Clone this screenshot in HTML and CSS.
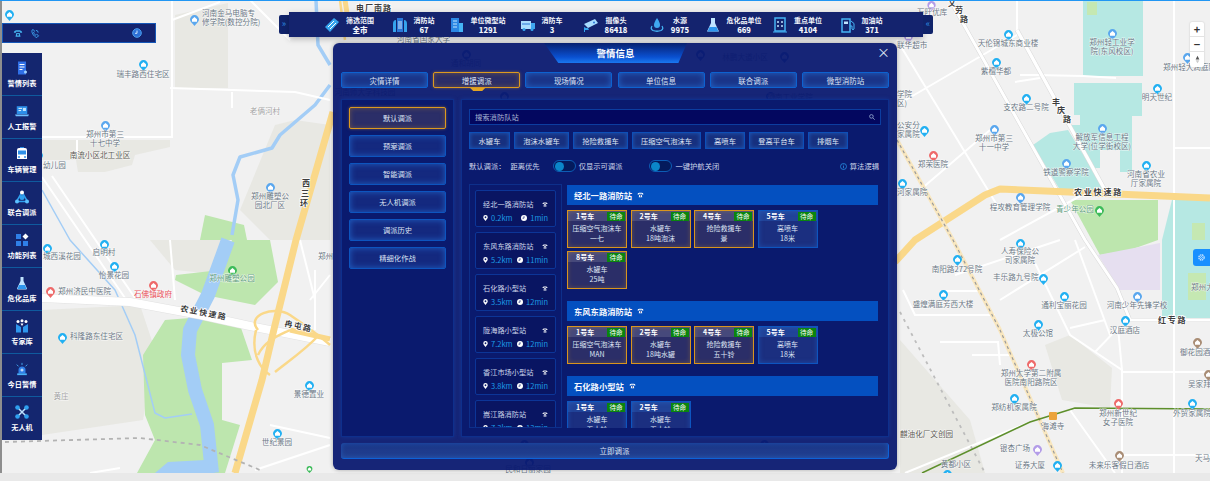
FILE: index.html
```html
<!DOCTYPE html>
<html lang="zh-CN">
<head>
  <meta charset="UTF-8" />
  <meta name="viewport" content="width=device-width, initial-scale=1.0" />
  <title>警情信息</title>
  <link rel="stylesheet" href="styles.css">
</head>
<body>
<svg class="defs" width="0" height="0">
  <symbol id="pin" viewBox="0 0 10 12"><path d="M5 0a5 5 0 0 1 5 5c0 2.500-2.500 4-5 7C2.500 9 0 7.500 0 5a5 5 0 0 1 5-5z"/><path d="M5 2 7.800 4.700V7.500H2.200V4.700z" fill="#fff"/></symbol>
  <symbol id="phone" viewBox="0 0 12 10"><path d="M1 4C1 1.500 3 1 6 1s5 .5 5 3H8.500V3h-5v1z" fill="#fff"/><path d="M3 9 4 4.500h4L9 9z" fill="#fff"/><circle cx="6" cy="6.500" r="1.100" fill="#0a1a6c"/></symbol>
  <symbol id="loc" viewBox="0 0 10 12"><path d="M5 0a4.500 4.500 0 0 1 4.500 4.500C9.500 7 7 9 5 12 3 9 .5 7 .5 4.500A4.500 4.500 0 0 1 5 0z" fill="#fff"/><circle cx="5" cy="4.500" r="1.800" fill="#0a1a6c"/></symbol>
  <symbol id="clock" viewBox="0 0 10 10"><circle cx="5" cy="5" r="5" fill="#fff"/><path d="M5 2v3.300H2.500" fill="none" stroke="#0a1a6c" stroke-width="1.200"/></symbol>
</svg>

<div class="page">
  <!-- map -->
  <svg class="map" viewBox="0 0 1210 473" width="1210" height="473">
    <rect width="1210" height="473" fill="#f1f1f1"/>
    <g fill="#e8e8e3">
      <path d="M175 15 228 3V88H175z"/>
      <path d="M42 140H170V147L135 155 132 165 105 172 78 172 76 160H42z"/>
      <path d="M240 210 275 125 295 120 330 125 330 240 295 240 270 240z"/>
      <path d="M42 310 140 305 155 350 143 420 42 435z"/>
      <path d="M150 240H230L225 275 175 270z"/>
      <path d="M900 340 970 420 985 473H900z"/>
      <path d="M1045 345 1070 335 1112 368 1110 408 1062 400z"/>
    </g>
    <g fill="#bde6ae">
      <path d="M232 240H270L278 282 255 305 205 295 175 280 176 275 220 270z"/>
      <path d="M165 320 190 318 240 325 252 360 222 363 222 420 240 425 225 473H137L155 440 145 415 143 355z"/>
      <path d="M205 215 244 225 247 240H200z"/>
      <path d="M1070 200H1158V240L1130 250 1100 255z"/>
    </g>
    <path d="M1098 255 1160 243V290H1120z" fill="#e6dff0"/>
    <g fill="#b6e8e3">
      <path d="M1083 0H1143V76H1083z"/>
      <path d="M1074 83H1142V116H1132V172H1120V150H1100V168H1090L1068 125H1080V115H1074z"/>
      <path d="M1033 145 1050 133 1068 130 1105 190H1060z"/>
      <path d="M1172 200H1210V320H1162V240z"/>
    </g>
    <path d="M1192 223H1205V240H1192zM1188 273H1206V300H1188z" fill="#c5e8b2"/>
    <path d="M1087 2H1097V15H1087z" fill="#c5e8b2"/>
    <!-- rivers -->
    <g fill="none" stroke="#a3cdf6" stroke-linejoin="round">
      <path d="M316 0 318 45 330 65M330 85 315 105 280 135 272 148 240 157 233 175 238 200 232 235" stroke-width="3.500"/>
      <path d="M42 190 70 240 115 290 135 335 155 413 165 418 192 414" stroke-width="1.500"/>
      <path d="M228 240 220 262 208 295 190 330 188 355 195 390 207 425 212 473" stroke-width="14"/>
    </g>
    <path d="M155 473 168 462 205 460 215 473z" fill="#a3cdf6"/>
    <!-- minor roads -->
    <g fill="none" stroke="#fff" stroke-width="2">
      <path d="M172 0V137H42M170 88 295 92 330 100M172 20 220 2M232 92V108M77 140V155M250 0 290 40"/>
      <path d="M170 240 175 300M270 425 330 438M255 470 330 445M90 473 120 468"/>
      <path d="M42 177 125 298M52 176 135 298M315 270V330M300 240 315 300M330 275 310 300"/>
      <path d="M1017 0V35M1020 75 1035 75 1083 76M1015 82 1040 78M1116 78 1083 76M1174 0V473M1174 148H1210"/>
      <path d="M897 40 1000 210M897 105 1017 35M920 190 990 130M1000 240 1082 195M955 275 1060 240M1000 300 1085 247"/>
      <path d="M1035 263 1070 335 1122 370V473M1070 328 1105 320M1095 352 1118 328 1122 370M1075 240 1110 335M1122 372H1210M1122 455H1210"/>
      <path d="M903 290 915 315H995M940 342H998L1000 365M972 355H1010M942 291H980M1070 410 1115 473M1123 321H1210M905 473 1030 422"/>
    </g>
    <!-- thick streets -->
    <g fill="none" stroke-linejoin="round">
      <path d="M950 0 1085 240 1117 288 1130 320H1210" stroke="#d9d9d9" stroke-width="4"/>
      <path d="M950 0 1085 240 1117 288 1130 320H1210" stroke="#fff" stroke-width="3"/>
      <path d="M1017 30 1105 190" stroke="#d9d9d9" stroke-width="4.500"/>
      <path d="M1017 30 1105 190" stroke="#fff" stroke-width="3.500"/>
      <path d="M42 298 130 302 200 315 250 326 330 342" stroke="#e2e2e2" stroke-width="9"/>
      <path d="M42 298 130 302 200 315 250 326 330 342" stroke="#fff" stroke-width="8"/>
    </g>
    <!-- highways -->
    <g fill="none" stroke-linejoin="round">
      <path d="M340 0 345 40M333 112 296 240 275 325 262 380 235 473M258 330C245 315 275 305 290 315S325 340 330 345M256 330C250 355 262 370 270 375M318 336C305 350 290 360 275 372M290 330C280 335 265 340 258 355" stroke="#fad889" stroke-width="2.500"/>
      <path d="M333 112 296 240 275 325 262 380 235 473" stroke="#fad889" stroke-width="7"/>
      <path d="M345 0 348 20" stroke="#fad889" stroke-width="5"/>
      <path d="M895 262 915 240 985 195 1000 189 1210 198" stroke="#fad889" stroke-width="7"/>
      <path d="M290 330 330 339" stroke="#fad889" stroke-width="5"/>
      <path d="M897 140 953 240 1000 330 1063 473" stroke="#f9e7bf" stroke-width="4"/>
      <path d="M897 140 953 240 1000 330 1063 473" stroke="#9a9a9a" stroke-width="1.200" stroke-dasharray="3 3"/>
      <path d="M900 312 985 473" stroke="#bdbdbd" stroke-width="1.800" stroke-dasharray="3 5"/>
      <path d="M5 442 140 438 200 445 260 470" stroke="#b3b3b3" stroke-width="1.800" stroke-dasharray="4 4"/>
      <path d="M922 473 1030 422 1075 408 1210 409" stroke="#5d8f2b" stroke-width="1.500"/>
    </g>
    <rect x="1049" y="412" width="8" height="8" rx="1" fill="#eba33c"/>

    <!-- markers -->
    <g fill="#22b0f2">
      <use href="#pin" x="5" y="10" width="9" height="11"/>
      <use href="#pin" x="139" y="60" width="9" height="11"/>
      <use href="#pin" x="34" y="151" width="9" height="11"/>
      <use href="#pin" x="43" y="244" width="9" height="11"/>
      <use href="#pin" x="100" y="240" width="9" height="11"/>
      <use href="#pin" x="110" y="262" width="9" height="11"/>
      <use href="#pin" x="58" y="333" width="9" height="11"/>
      <use href="#pin" x="305" y="381" width="9" height="11"/>
      <use href="#pin" x="273" y="429" width="9" height="11"/>
      <use href="#pin" x="1004" y="30" width="9" height="11"/>
      <use href="#pin" x="992" y="58" width="9" height="11"/>
      <use href="#pin" x="1022" y="94" width="9" height="11"/>
      <use href="#pin" x="920" y="126" width="9" height="11"/>
      <use href="#pin" x="898" y="179" width="9" height="11"/>
      <use href="#pin" x="1153" y="84" width="9" height="11"/>
      <use href="#pin" x="1142" y="161" width="9" height="11"/>
      <use href="#pin" x="1016" y="239" width="9" height="11"/>
      <use href="#pin" x="953" y="255" width="9" height="11"/>
      <use href="#pin" x="1039" y="274" width="9" height="11"/>
      <use href="#pin" x="1060" y="292" width="9" height="11"/>
      <use href="#pin" x="939" y="290" width="9" height="11"/>
      <use href="#pin" x="1121" y="316" width="9" height="11"/>
      <use href="#pin" x="1034" y="320" width="9" height="11"/>
      <use href="#pin" x="1010" y="394" width="9" height="11"/>
      <use href="#pin" x="1188" y="399" width="9" height="11"/>
      <use href="#pin" x="1053" y="461" width="9" height="11"/>
      <use href="#pin" x="943" y="470" width="9" height="11"/>
    </g>
    <g fill="#5aa7ee">
      <use href="#pin" x="190" y="15" width="9" height="11"/>
      <use href="#pin" x="101" y="121" width="9" height="11"/>
      <use href="#pin" x="266" y="183" width="9" height="11"/>
      <use href="#pin" x="1108" y="29" width="9" height="11"/>
      <use href="#pin" x="1183" y="53" width="9" height="11"/>
      <use href="#pin" x="990" y="125" width="9" height="11"/>
      <use href="#pin" x="1098" y="124" width="9" height="11"/>
      <use href="#pin" x="1062" y="159" width="9" height="11"/>
      <use href="#pin" x="1016" y="193" width="9" height="11"/>
      <use href="#pin" x="1133" y="292" width="9" height="11"/>
    </g>
    <g fill="#ee6a6a">
      <use href="#pin" x="46" y="287" width="9" height="11"/>
      <use href="#pin" x="149" y="281" width="9" height="11"/>
      <use href="#pin" x="929" y="151" width="9" height="11"/>
      <use href="#pin" x="1027" y="360" width="9" height="11"/>
      <use href="#pin" x="1114" y="399" width="9" height="11"/>
    </g>
    <g fill="#3dbb5a">
      <use href="#pin" x="228" y="266" width="9" height="11"/>
      <use href="#pin" x="305" y="466" width="9" height="7"/>
      <use href="#pin" x="1095" y="206" width="9" height="11"/>
    </g>
    <g fill="#a98d75">
      <use href="#pin" x="1193" y="338" width="9" height="11"/>
      <use href="#pin" x="1204" y="370" width="9" height="11"/>
      <use href="#pin" x="1115" y="451" width="9" height="11"/>
    </g>
    <g fill="#b39ce8">
      <use href="#pin" x="927" y="1" width="9" height="10"/>
      <use href="#pin" x="904" y="32" width="9" height="11"/>
      <use href="#pin" x="1033" y="445" width="9" height="11"/>
    </g>
    <g fill="#2a5fc0">
      <use href="#pin" x="462" y="50" width="9" height="11"/>
      <use href="#pin" x="696" y="50" width="9" height="11"/>
      <use href="#pin" x="780" y="52" width="9" height="11"/>
      <use href="#pin" x="500" y="92" width="9" height="11"/>
      <use href="#pin" x="766" y="92" width="9" height="11"/>
      <use href="#pin" x="520" y="225" width="9" height="11"/>
      <use href="#pin" x="700" y="400" width="9" height="11"/>
      <use href="#pin" x="820" y="400" width="9" height="11"/>
      <use href="#pin" x="520" y="440" width="9" height="11"/>
      <use href="#pin" x="760" y="440" width="9" height="11"/>
      <use href="#pin" x="525" y="458" width="9" height="11"/>
    </g>

    <!-- labels -->
    <g class="lb">
      <text x="202" y="16">河南金马电脑专</text><text x="202" y="25">修学院(数控分院)</text>
      <text class="mid" x="143" y="77">瑞丰路西住宅区</text>
      <text class="mid" x="105" y="137">郑州市第三</text><text class="mid" x="105" y="146">十七中学</text>
      <text class="mid dark" x="100" y="158">南流小区北工业区</text>
      <text x="43" y="168">幼儿园</text>
      <text class="mid" x="270" y="199">郑州雕塑公</text><text class="mid" x="270" y="208">园北厂区</text>
      <text class="mid grey" x="265" y="114">老俩河村</text>
      <text x="43" y="259">城西溪花园</text>
      <text class="mid" x="104" y="255">启明村</text>
      <text class="mid" x="114" y="278">怡景花园</text>
      <text class="mid park" x="232" y="281">郑州雕塑公园</text>
      <text x="58" y="294">郑州济民中医院</text>
      <text class="mid red" x="153" y="297">石佛镇政府</text>
      <text x="70" y="339">科隆路东住宅区</text>
      <text class="mid grey" x="61" y="399">黄庄</text>
      <text class="mid" x="309" y="397">景德置业</text>
      <text class="mid" x="277" y="445">世纪景园</text>
      <text x="318" y="259">郑州</text>
      <text x="917" y="15">万旺优库</text>
      <text x="897" y="48">联华超市</text>
      <text class="mid" x="1008" y="46">天伦锦城东商业楼</text>
      <text class="mid" x="996" y="74">紫檀华都</text>
      <text class="mid" x="1026" y="110">支农路二号院</text>
      <text class="mid" x="994" y="141">郑州市第三</text><text class="mid" x="994" y="150">十一中学</text>
      <text x="897" y="128">公安分</text><text x="897" y="137">家属院</text>
      <text x="897" y="97">学院</text><text x="897" y="106">区)</text>
      <text class="mid" x="933" y="167">郑荣医院</text>
      <text x="897" y="195">河家属院</text>
      <text class="mid" x="1020" y="210">程攻教育管理学院</text>
      <text class="park" x="1056" y="212">青少年公园</text>
      <text class="mid" x="1066" y="175">铁道警察学院</text>
      <text class="mid" x="1102" y="140">解放军信息工程</text><text class="mid" x="1102" y="149">大学(位学街校区)</text>
      <text class="mid" x="1146" y="177">河南省农业</text><text class="mid" x="1146" y="186">厅家属院</text>
      <text class="mid" x="1112" y="45">郑州轻工业学</text><text class="mid" x="1112" y="54">院(东风校区)</text>
      <text x="1163" y="70">郑州轻大润庭院</text>
      <text class="mid" x="1157" y="100">明天世纪</text>
      <text class="mid" x="1020" y="254">人寿保险公</text><text class="mid" x="1020" y="263">司家属院</text>
      <text class="mid" x="957" y="272">南阳路272号院</text>
      <text x="993" y="280">丰乐路九号院</text>
      <text class="mid" x="1064" y="308">通利宝丽花园</text>
      <text class="mid" x="943" y="307">盛煌满庭芳西大楼</text>
      <text class="mid" x="1137" y="308">河南少年先锋学校</text>
      <text class="mid" x="1125" y="333">汉庭酒店</text>
      <text class="mid" x="1038" y="336">太极公馆</text>
      <text x="1180" y="355">御花园酒店</text>
      <text class="mid" x="1031" y="376">郑州大学第二附属</text><text class="mid" x="1031" y="385">医院南阳路院区</text>
      <text x="1188" y="387">吴家拜</text>
      <text class="mid" x="1014" y="410">郑纺机家属院</text>
      <text class="mid" x="1118" y="416">郑州新世纪</text><text class="mid" x="1118" y="425">女子医院</text>
      <text class="mid" x="1192" y="416">外贸家属院</text>
      <text class="mid" x="1053" y="429">海滩寺</text>
      <text class="dark" x="900" y="437">麒油化厂文创园</text>
      <text class="mid" x="1015" y="451">银杏广场</text>
      <text class="mid" x="1030" y="468">证券大厦</text>
      <text class="mid" x="1119" y="468">未来乐客假日酒店</text>
      <text x="1195" y="461">天马</text>
      <text class="mid" x="956" y="467">黄都小区</text>
      <text x="1191" y="290">郑州大</text>
      <text x="397" y="42">河南省国家大学</text>
      <text class="mid" x="466" y="66">通和胡同</text>
      <text class="mid" x="745" y="60">林鹏大道小区</text>
      <text class="mid" x="365" y="95">河南师大学科技园</text>
      <text class="mid" x="790" y="100">河南工业学院</text>
      <text class="mid" x="780" y="195">自由街社区</text>
      <text class="mid" x="528" y="472">民和日丽家园</text>
    </g>
    <g class="road">
      <text x="356" y="11" letter-spacing="1">电厂南路</text>
      <text x="302 301 300" y="186 196 206">西三环</text>
      <text transform="translate(180 311) rotate(11)" letter-spacing="1.500">农业快速路</text>
      <text transform="translate(284 326) rotate(12)" letter-spacing="1.500">冉屯路</text>
      <text x="1074" y="195" letter-spacing="1.800">农业快速路</text>
      <text x="1158" y="323" letter-spacing="1.800">红专路</text>
      <text x="948 955 960" y="6 13 22">文劳路</text>
      <text x="1052 1057 1063" y="105 113 122">丰庆路</text>
    </g>
  </svg>
  <div class="map-edge"></div>

  <!-- phone strip -->
  <div class="call-bar">
    <svg class="call-ico" viewBox="0 0 12 10"><path d="M1 4C1 1.500 3 1 6 1s5 .5 5 3H8.500V3h-5v1z" fill="#45b4f0"/><path d="M3 9 4 4.500h4L9 9z" fill="#45b4f0"/><circle cx="6" cy="6.500" r="1.100" fill="#14236e"/></svg>
    <svg class="call-ico" viewBox="0 0 10 10"><path d="M2 1C.5 3 3 8 7 9.500L9 7.500 7 6 6 7C5 6.500 3.500 5 3.500 3.500L4.500 2.500 3 .5z" fill="none" stroke="#3fa9f5" stroke-width="1"/><path d="M6 1.500a2.500 2.500 0 0 1 2.500 2.500" fill="none" stroke="#3fa9f5"/></svg>
    <svg class="call-ico clock-ico" viewBox="0 0 10 10"><circle cx="5" cy="5" r="4.300" fill="#2d6fd6" stroke="#4aa0f0"/><path d="M5 2.500v2.800H3" fill="none" stroke="#cfe6ff"/></svg>
  </div>

  <!-- left menu -->
  <nav class="side">
    <a class="side-item"><svg viewBox="0 0 14 14"><path d="M3 .5H11V13.500H3z" fill="#2f6fe6"/><path d="M4.500 3.500H9.500M4.500 6H9.500M4.500 8.500H7.500" stroke="#fff"/><circle cx="10.500" cy="11" r="1.500" fill="#9fd4ff"/></svg><span>警情列表</span></a>
    <a class="side-item"><svg viewBox="0 0 16 14"><path d="M2 1.500H14V10.500H2z" fill="#2c8ee8"/><path d="M4 4H8M4 6.500H7" stroke="#fff"/><path d="M9 3.500H12.500V7H9z" fill="#bfe3ff"/><path d="M0 11H16L15 13H1z" fill="#6fc0ff"/></svg><span>人工报警</span></a>
    <a class="side-item"><svg viewBox="0 0 14 14"><path d="M2 3Q2 1 4 1H10Q12 1 12 3V12H2z" fill="#fff"/><path d="M3 3.500H11V7.500H3z" fill="#2e8fe8"/><path d="M5 1H9V0H5z" fill="#2e8fe8"/><circle cx="4" cy="10" r="1" fill="#2e8fe8"/><circle cx="10" cy="10" r="1" fill="#2e8fe8"/></svg><span>车辆管理</span></a>
    <a class="side-item"><svg viewBox="0 0 14 14"><path d="M7 2 12.500 11.500H1.500z" fill="none" stroke="#2fa0f0" stroke-width="1.500"/><circle cx="7" cy="7.500" r="2.500" fill="#2fa0f0"/><circle cx="7" cy="2.500" r="2" fill="#fff"/><circle cx="2" cy="11.500" r="2" fill="#5cc0ff"/><circle cx="12" cy="11.500" r="2" fill="#5cc0ff"/></svg><span>联合调派</span></a>
    <a class="side-item"><svg viewBox="0 0 14 14"><path d="M1 1H6V6H1zM1 8H6V13H1zM8 8H13V13H8z" fill="#2f7fe8"/><path d="M10.500 .5 13.500 3.500 10.500 6.500 7.500 3.500z" fill="#fff"/></svg><span>功能列表</span></a>
    <a class="side-item"><svg viewBox="0 0 14 14"><path d="M5.500 1H8.500V5L12 12.500Q12 13.500 11 13.500H3Q2 13.500 2 12.500L5.500 5z" fill="#bfe4ff"/><path d="M4 9H10L11.500 13H2.500z" fill="#2d96ee"/></svg><span>危化品库</span></a>
    <a class="side-item"><svg viewBox="0 0 14 14"><circle cx="3" cy="2.500" r="1.500" fill="#fff"/><circle cx="7" cy="1.800" r="1.500" fill="#fff"/><circle cx="11" cy="2.500" r="1.500" fill="#fff"/><path d="M1 5 6 8V13.500H1zM13 5 8 8V13.500H13z" fill="#2f97ee"/><path d="M5.500 4.500H8.500L7 7z" fill="#fff"/></svg><span>专家库</span></a>
    <a class="side-item"><svg viewBox="0 0 16 14"><path d="M4 12V8a4 4 0 0 1 8 0v4z" fill="#2f7fe8"/><path d="M2.500 12H13.500V14H2.500z" fill="#49b2fa"/><path d="M8 6.500V10M6.200 8.200H9.800" stroke="#fff"/><path d="M8 0V2.500M2 2 4 4M14 2 12 4" stroke="#49b2fa"/></svg><span>今日警情</span></a>
    <a class="side-item"><svg viewBox="0 0 14 14"><path d="M3 3 11 11M11 3 3 11" stroke="#bfe4ff" stroke-width="1.500"/><circle cx="2.500" cy="2.500" r="2.300" fill="#2fa0f0"/><circle cx="11.500" cy="2.500" r="2.300" fill="#2fa0f0"/><circle cx="2.500" cy="11.500" r="2.300" fill="#2fa0f0"/><circle cx="11.500" cy="11.500" r="2.300" fill="#2fa0f0"/></svg><span>无人机</span></a>
  </nav>

  <!-- top stats -->
  <div class="stat-handle left">»</div>
  <div class="stat-bar">
    <div class="stat"><svg viewBox="0 0 16 16"><path d="M1 10 10 1 15 5 6 15z" fill="#35a4ee"/><path d="M4 10 10 4M6 12 12 6" stroke="#fff"/></svg><p>筛选范围<b>全市</b></p></div>
    <div class="stat"><svg viewBox="0 0 16 16"><path d="M1 15V7Q1 3 4 3V15zM15 15V7Q15 3 12 3V15z" fill="#35a4ee"/><path d="M5 1H11V15H5z" fill="#2a77d8"/><path d="M7 4V12M9 4V12" stroke="#cfe9ff"/></svg><p>消防站<b>67</b></p></div>
    <div class="stat"><svg viewBox="0 0 16 16"><path d="M2 1H10V15H2z" fill="#2a86e4"/><path d="M10 6H14V15H10z" fill="#45b4f5"/><path d="M4 4H8M4 7H8M4 10H8" stroke="#bfe4ff"/></svg><p>单位微型站<b>1291</b></p></div>
    <div class="stat"><svg viewBox="0 0 16 16"><path d="M1 4H11V12H1z" fill="#a9dcff"/><path d="M11 6H15V12H11z" fill="#3fa7f0"/><path d="M2 7H10" stroke="#2a77d8"/><circle cx="4" cy="12.500" r="1.500" fill="#35a4ee"/><circle cx="12" cy="12.500" r="1.500" fill="#35a4ee"/></svg><p>消防车<b>3</b></p></div>
    <div class="stat"><svg viewBox="0 0 16 16"><path d="M1 7 12 2 15 6 5 11z" fill="#a9dcff"/><path d="M5 11 6 13H2V15H1V10L3 11z" fill="#35a4ee"/><circle cx="11" cy="5.500" r="1" fill="#2a77d8"/></svg><p>摄像头<b>86418</b></p></div>
    <div class="stat"><svg viewBox="0 0 16 16"><path d="M8 1C10 4 11 6 11 8A3 3 0 0 1 5 8C5 6 6 4 8 1z" fill="#3fa7f0"/><path d="M3 9Q1 12 4 13.500 8 15 12 13.500 15 12 13 9" fill="none" stroke="#45b4f5" stroke-width="1.300"/></svg><p>水源<b>9975</b></p></div>
    <div class="stat"><svg viewBox="0 0 16 16"><path d="M6 1H10V6L14 14.500H2L6 6z" fill="#bfe4ff"/><path d="M4.500 10H11.500L13.500 14.500H2.500z" fill="#2d96ee"/></svg><p>危化品单位<b>669</b></p></div>
    <div class="stat"><svg viewBox="0 0 16 16"><path d="M3 1H13V14H3z" fill="none" stroke="#45b4f5" stroke-width="1.500"/><path d="M6 4V6M10 4V6M6 8V10M10 8V10" stroke="#bfe4ff" stroke-width="1.500"/><path d="M1 15H15" stroke="#45b4f5"/></svg><p>重点单位<b>4104</b></p></div>
    <div class="stat"><svg viewBox="0 0 16 16"><path d="M2 2H10V15H2z" fill="none" stroke="#45b4f5" stroke-width="1.500"/><path d="M4 4.500H8V7H4z" fill="#bfe4ff"/><path d="M11 4 14 6.500V12Q13 13.500 12 12V9H10" fill="none" stroke="#45b4f5"/></svg><p>加油站<b>371</b></p></div>
  </div>
  <div class="stat-handle right">«</div>

  <!-- dialog -->
  <section class="dialog">
    <div class="dialog-title">警情信息</div>
    <span class="dialog-close">×</span>

    <div class="tabs">
      <button class="tab">灾情详情</button>
      <button class="tab active">增援调派</button>
      <button class="tab">现场情况</button>
      <button class="tab">单位信息</button>
      <button class="tab">联合调派</button>
      <button class="tab">微型消防站</button>
    </div>

    <div class="panels">
      <div class="panel mode-panel">
        <button class="mode active">默认调派</button>
        <button class="mode">预案调派</button>
        <button class="mode">智能调派</button>
        <button class="mode">无人机调派</button>
        <button class="mode">调派历史</button>
        <button class="mode">精细化作战</button>
      </div>

      <div class="panel main-panel">
        <div class="search">
          <span>搜索消防队站</span>
          <svg viewBox="0 0 10 10"><circle cx="4" cy="4" r="3" fill="none" stroke="#9fb4d8" stroke-width="1.300"/><path d="M6.500 6.500 9.500 9.500" stroke="#9fb4d8" stroke-width="1.300"/></svg>
        </div>

        <div class="filters">
          <button class="filter f3">水罐车</button>
          <button class="filter f5">泡沫水罐车</button>
          <button class="filter f4">抢险救援车</button>
          <button class="filter f6">压缩空气泡沫车</button>
          <button class="filter f2">高喷车</button>
          <button class="filter f4">登高平台车</button>
          <button class="filter f2">排烟车</button>
        </div>

        <div class="options">
          <span>默认调派：</span>
          <span class="opt-sort">距离优先</span>
          <i class="toggle first"></i>
          <span>仅显示可调派</span>
          <i class="toggle second"></i>
          <span>一键护航关闭</span>
          <span class="algo"><svg viewBox="0 0 10 10"><circle cx="5" cy="5" r="4.300" fill="none" stroke="#2a9df0"/><path d="M5 4V7.500M5 2.300V3.300" stroke="#2a9df0"/></svg>算法逻辑</span>
        </div>

        <div class="dispatch">
          <div class="stations">
            <div class="st-card"><div class="st-name">经北一路消防站<svg viewBox="0 0 12 10"><use href="#phone"/></svg></div><div class="st-meta"><svg viewBox="0 0 10 12"><use href="#loc"/></svg><span>0.2km</span><svg class="clk" viewBox="0 0 10 10"><use href="#clock"/></svg><span>1min</span></div></div>
            <div class="st-card"><div class="st-name">东风东路消防站<svg viewBox="0 0 12 10"><use href="#phone"/></svg></div><div class="st-meta"><svg viewBox="0 0 10 12"><use href="#loc"/></svg><span>5.2km</span><svg class="clk" viewBox="0 0 10 10"><use href="#clock"/></svg><span>11min</span></div></div>
            <div class="st-card"><div class="st-name">石化路小型站<svg viewBox="0 0 12 10"><use href="#phone"/></svg></div><div class="st-meta"><svg viewBox="0 0 10 12"><use href="#loc"/></svg><span>3.5km</span><svg class="clk" viewBox="0 0 10 10"><use href="#clock"/></svg><span>12min</span></div></div>
            <div class="st-card"><div class="st-name">陇海路小型站<svg viewBox="0 0 12 10"><use href="#phone"/></svg></div><div class="st-meta"><svg viewBox="0 0 10 12"><use href="#loc"/></svg><span>7.2km</span><svg class="clk" viewBox="0 0 10 10"><use href="#clock"/></svg><span>12min</span></div></div>
            <div class="st-card"><div class="st-name">香江市场小型站<svg viewBox="0 0 12 10"><use href="#phone"/></svg></div><div class="st-meta"><svg viewBox="0 0 10 12"><use href="#loc"/></svg><span>3.8km</span><svg class="clk" viewBox="0 0 10 10"><use href="#clock"/></svg><span>12min</span></div></div>
            <div class="st-card"><div class="st-name">嵩江路消防站<svg viewBox="0 0 12 10"><use href="#phone"/></svg></div><div class="st-meta"><svg viewBox="0 0 10 12"><use href="#loc"/></svg><span>7.3km</span><svg class="clk" viewBox="0 0 10 10"><use href="#clock"/></svg><span>13min</span></div></div>
          </div>

          <div class="groups">
            <div class="group">
              <h3>经北一路消防站<svg viewBox="0 0 12 10"><use href="#phone"/></svg></h3>
              <div class="trucks">
                <div class="truck on"><div class="truck-top">1号车<em>待命</em></div><p>压缩空气泡沫车</p><p>一七</p></div>
                <div class="truck on"><div class="truck-top">2号车<em>待命</em></div><p>水罐车</p><p>18吨泡沫</p></div>
                <div class="truck on"><div class="truck-top">4号车<em>待命</em></div><p>抢险救援车</p><p>景</p></div>
                <div class="truck"><div class="truck-top">5号车<em>待命</em></div><p>高喷车</p><p>18米</p></div>
                <div class="truck on"><div class="truck-top">8号车<em>待命</em></div><p>水罐车</p><p>25吨</p></div>
              </div>
            </div>
            <div class="group">
              <h3>东风东路消防站<svg viewBox="0 0 12 10"><use href="#phone"/></svg></h3>
              <div class="trucks">
                <div class="truck on"><div class="truck-top">1号车<em>待命</em></div><p>压缩空气泡沫车</p><p>MAN</p></div>
                <div class="truck on"><div class="truck-top">2号车<em>待命</em></div><p>水罐车</p><p>18吨水罐</p></div>
                <div class="truck on"><div class="truck-top">4号车<em>待命</em></div><p>抢险救援车</p><p>五十铃</p></div>
                <div class="truck"><div class="truck-top">5号车<em>待命</em></div><p>高喷车</p><p>18米</p></div>
              </div>
            </div>
            <div class="group">
              <h3>石化路小型站<svg viewBox="0 0 12 10"><use href="#phone"/></svg></h3>
              <div class="trucks">
                <div class="truck"><div class="truck-top">1号车<em>待命</em></div><p>水罐车</p><p>五十铃</p></div>
                <div class="truck"><div class="truck-top">2号车<em>待命</em></div><p>水罐车</p><p>五十铃</p></div>
              </div>
            </div>
          </div>
        </div>
      </div>
    </div>

    <button class="go">立即调派</button>
  </section>

  <!-- map controls -->
  <div class="zoom-ctrl">
    <span class="z-btn">+</span>
    <span class="z-btn">−</span>
    <span class="z-btn compass"><svg viewBox="0 0 8 12"><path d="M4 0 7 6H1z" fill="#555"/><path d="M4 12 7 7H1z" fill="#ccc"/></svg></span>
  </div>
  <div class="gear-tab"><svg viewBox="0 0 12 12"><circle cx="6" cy="6" r="3.500" fill="none" stroke="#d8ecff" stroke-width="1.600" stroke-dasharray="2 .8"/><circle cx="6" cy="6" r="1.300" fill="none" stroke="#d8ecff"/></svg></div>
</div>
</body>
</html>
```

FILE: styles.css
```css
* { box-sizing: border-box; }
body {
  margin: 0;
  background: #e9e9e9;
  font-family: "Noto Sans CJK SC", "Noto Sans", sans-serif;
  color: #e6ecf8;
  overflow: hidden;
}
button {
  font-family: inherit;
  color: #dfe6f5;
  cursor: pointer;
  padding: 0;
}
p { margin: 0; }
.defs { position: absolute; }
.page {
  position: relative;
  width: 1210px;
  height: 481px;
  overflow: hidden;
  border-top: 1px solid #2196f3;
}

/* map */
.map {
  display: block;
  margin-top: -1px;
}
.map-edge {
  position: absolute;
  left: 0;
  top: 0;
  width: 2px;
  height: 472px;
  background: #8e8e8e;
}
.lb text {
  font-size: 7.6px;
  fill: #6b7885;
  paint-order: stroke;
  stroke: rgba(255,255,255,0.7);
  stroke-width: 1px;
}
.lb .mid { text-anchor: middle; }
.lb .dark { fill: #5c5a52; }
.lb .grey { fill: #a3a3a3; }
.lb .red { fill: #e8505a; }
.lb .park { fill: #5f9c80; }
.road text {
  font-size: 8px;
  font-weight: 700;
  fill: #3d3d3d;
  paint-order: stroke;
  stroke: #fff;
  stroke-width: 1.500px;
}

/* phone strip */
.call-bar {
  position: absolute;
  left: 2px;
  top: 22px;
  width: 154px;
  height: 20px;
  background: #14236e;
  border: 1px solid #1557b8;
  display: flex;
  align-items: center;
  padding-left: 10px;
}
.call-ico { width: 10px; height: 9px; margin-right: 7px; }
.clock-ico { margin-left: 85px; height: 10px; }

/* left menu */
.side {
  position: absolute;
  left: 2px;
  top: 52px;
  width: 40px;
  background: #14266f;
}
.side-item {
  height: 43px;
  border-bottom: 1px solid #0f5a9e;
  display: flex;
  flex-direction: column;
  align-items: center;
  justify-content: center;
  gap: 3px;
  color: #fff;
  font-size: 7.2px;
  font-weight: 700;
  line-height: 10px;
}
.side-item:last-child { border-bottom: 0; }
.side-item svg { width: 14px; height: 14px; }

/* top stats */
.stat-bar {
  position: absolute;
  left: 289px;
  top: 11px;
  width: 634px;
  height: 25px;
  background: #14236e;
  box-shadow: 0 2px 6px rgba(0,0,0,0.25);
  padding-left: 28px;
  display: flex;
  align-items: center;
}
.stat {
  width: 64px;
  flex: none;
  display: flex;
  align-items: center;
  justify-content: center;
  gap: 6px;
}
.stat svg { width: 16px; height: 16px; flex: none; }
.stat p {
  font-size: 7px;
  font-weight: 700;
  line-height: 9px;
  text-align: center;
  color: #f2f5fb;
  white-space: nowrap;
}
.stat b {
  display: block;
  font-size: 7.5px;
}
.stat-handle {
  position: absolute;
  top: 14px;
  width: 10px;
  height: 19px;
  background: #10236a;
  color: #2f8fe0;
  font-size: 9px;
  line-height: 17px;
  text-align: center;
}
.stat-handle.left { left: 279px; border-radius: 2px 0 0 2px; }
.stat-handle.right { left: 923px; border-radius: 0 2px 2px 0; }

/* dialog */
.dialog {
  position: absolute;
  left: 333px;
  top: 42px;
  width: 564px;
  height: 427px;
  padding: 29px 8px 0;
  background: rgba(9,25,112,0.95);
  border-radius: 6px;
  box-shadow: 0 0 4px rgba(0,0,0,0.3);
}
.dialog-title {
  position: absolute;
  left: 211px;
  top: 0;
  width: 143px;
  height: 20px;
  background: linear-gradient(#08206f, #0a50d0 70%, #1a78f0);
  clip-path: polygon(0 0, 100% 0, 94% 100%, 10% 100%);
  text-align: center;
  font-size: 9.500px;
  font-weight: 700;
  line-height: 20px;
  color: #fff;
}
.dialog-close {
  position: absolute;
  right: 7px;
  top: 1px;
  font-size: 13px;
  line-height: 16px;
  color: #dde5f5;
}
.tabs {
  display: flex;
  justify-content: space-between;
}
.tab {
  position: relative;
  width: 87px;
  height: 16px;
  background: #1a3488;
  border: 1px solid #0d62d0;
  border-radius: 2px;
  box-shadow: inset 0 0 6px rgba(40,130,240,0.6);
  font-size: 7.500px;
  line-height: 13px;
}
.tab.active {
  background: #2b2e68;
  border-color: #dc9a20;
  box-shadow: inset 0 0 5px rgba(220,150,30,0.35), 0 0 3px rgba(220,150,30,0.5);
}
.tab.active::after {
  content: "";
  position: absolute;
  left: 36px;
  top: 15px;
  width: 15px;
  height: 3px;
  background: #e3a424;
  clip-path: polygon(0 0, 100% 0, 80% 100%, 20% 100%);
}
.panels {
  display: flex;
  gap: 7px;
  margin-top: 11px;
  height: 338px;
}
.panel {
  background: #0a1a6e;
  border: 1px solid #0e2f8c;
  box-shadow: 0 0 4px rgba(20,90,210,0.3);
}
.mode-panel {
  width: 113px;
  flex: none;
  padding: 7px;
  display: flex;
  flex-direction: column;
  gap: 6px;
}
.mode {
  height: 22px;
  background: #14297f;
  border: 1px solid #0d55bf;
  border-radius: 2px;
  box-shadow: inset 0 0 6px rgba(40,130,240,0.6);
  font-size: 7.300px;
}
.mode.active {
  background: #2b2e68;
  border-color: #dc9a20;
  box-shadow: inset 0 0 5px rgba(220,150,30,0.35), 0 0 3px rgba(220,150,30,0.5);
}
.main-panel {
  flex: 1;
  min-width: 0;
  padding: 9px 7px 0;
  overflow: hidden;
}
.search {
  height: 16px;
  background: #03075f;
  border: 1px solid #0c3da0;
  padding: 0 5px;
  display: flex;
  align-items: center;
  justify-content: space-between;
  font-size: 7.300px;
  color: #a9b6d6;
}
.search svg { width: 6px; height: 6px; }
.filters {
  display: flex;
  gap: 4px;
  margin-top: 7px;
}
.filter {
  height: 17px;
  background: #17307f;
  border: 1px solid #0d4fb8;
  box-shadow: inset 0 0 4px rgba(40,130,240,0.5);
  font-size: 7.300px;
}
.f2 { width: 40px; }
.f3 { width: 41px; }
.f4 { width: 55px; }
.f5 { width: 55px; }
.f6 { width: 69px; }
.options {
  display: flex;
  align-items: center;
  height: 12px;
  margin-top: 11px;
  font-size: 7.300px;
  color: #cfd8ec;
}
.opt-sort { margin-left: 5px; }
.toggle {
  width: 23px;
  height: 12px;
  border-radius: 6px;
  background: #041a5c;
  border: 1px solid #0d5cb5;
  position: relative;
  margin: 0 3px 0 13px;
}
.toggle::after {
  content: "";
  position: absolute;
  left: 1px;
  top: 0.5px;
  width: 9px;
  height: 9px;
  border-radius: 50%;
  background: #0b86c9;
}
.toggle.second { margin-left: 27px; }
.algo {
  margin-left: auto;
  margin-right: 2px;
  display: flex;
  align-items: center;
  gap: 3px;
}
.algo svg { width: 7px; height: 7px; }
.dispatch {
  display: flex;
  gap: 5px;
  margin-top: 12px;
  height: 244px;
}
.stations {
  width: 93px;
  flex: none;
  border: 1px solid #0d2f8a;
  padding: 5px 5px 0;
  overflow: hidden;
}
.st-card {
  width: 81px;
  height: 37px;
  margin-bottom: 5px;
  border: 1px solid #0c3597;
  border-radius: 2px;
  padding: 8px 7px 0;
  background: #091562;
}
.st-name {
  display: flex;
  justify-content: space-between;
  align-items: center;
  font-size: 7.200px;
  line-height: 10px;
  white-space: nowrap;
  color: #cdd6ea;
}
.st-name svg { width: 6px; height: 5px; }
.st-meta {
  display: flex;
  align-items: center;
  margin-top: 4px;
  font-size: 7.500px;
  line-height: 10px;
  color: #1c9be6;
  white-space: nowrap;
}
.st-meta svg { width: 5px; height: 6px; margin-right: 3px; flex: none; }
.st-meta .clk { width: 6px; height: 6px; margin: 0 3px 0 auto; }
.groups {
  flex: 1;
  min-width: 0;
  margin-right: 3px;
  padding-top: 1px;
  overflow: hidden;
}
.group { margin-bottom: 12px; }
.group h3 {
  margin: 0 0 5px;
  height: 20px;
  background: #0450c0;
  padding-left: 7px;
  display: flex;
  align-items: center;
  gap: 5px;
  font-size: 8.300px;
  font-weight: 700;
  color: #f4f7fd;
}
.group h3 svg { width: 7px; height: 6px; }
.trucks {
  display: flex;
  flex-wrap: wrap;
  gap: 3px 3.500px;
}
.truck {
  width: 60px;
  height: 38px;
  background: #1b2f80;
  border: 1px solid #0d55c0;
  box-shadow: inset 0 0 5px rgba(40,130,240,0.35);
  text-align: center;
  font-size: 7px;
  line-height: 10px;
  color: #dfe5f4;
}
.truck.on {
  background: #2b2e68;
  border-color: #d9951e;
  box-shadow: inset 0 0 5px rgba(220,150,30,0.3);
}
.truck-top {
  height: 10px;
  margin-bottom: 2px;
  padding-left: 8px;
  background: rgba(255,255,255,0.13);
  display: flex;
  justify-content: space-between;
  align-items: center;
  font-weight: 700;
  color: #fff;
}
.truck:not(.on) .truck-top { background: rgba(60,150,250,0.2); }
.truck-top em {
  width: 18px;
  height: 9px;
  margin-right: 1px;
  background: #0a850f;
  font-style: normal;
  font-weight: 400;
  font-size: 6.500px;
  line-height: 9px;
  text-align: center;
}
.go {
  display: block;
  width: 100%;
  height: 16px;
  margin-top: 6px;
  background: linear-gradient(#1a3688, #22408f);
  border: 0;
  border-right: 1px solid #0d62d8;
  border-bottom: 1px solid #0d62d8;
  border-radius: 3px;
  box-shadow: inset 0 0 5px rgba(40,130,240,0.4);
  font-size: 7.500px;
}

/* map controls */
.zoom-ctrl {
  position: absolute;
  left: 1190px;
  top: 21px;
  width: 14px;
  background: #fff;
  border-radius: 2px;
  box-shadow: 0 0 2px rgba(0,0,0,0.2);
}
.z-btn {
  display: block;
  height: 15px;
  border-bottom: 1px solid #e3e3e3;
  text-align: center;
  font-size: 11px;
  font-weight: 700;
  line-height: 14px;
  color: #333;
}
.z-btn.compass { border: 0; }
.compass svg { width: 5px; height: 9px; }
.gear-tab {
  position: absolute;
  left: 1193px;
  top: 248px;
  width: 17px;
  height: 17px;
  background: #1890ff;
  border-radius: 3px 0 0 3px;
  display: flex;
  align-items: center;
  justify-content: center;
}
.gear-tab svg { width: 9px; height: 9px; }
```
